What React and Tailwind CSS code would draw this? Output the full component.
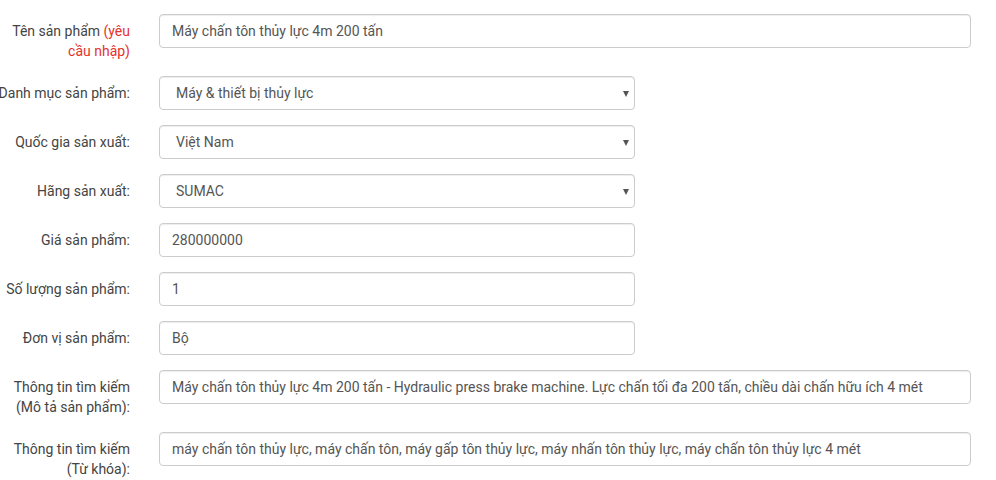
import React from "react";

const rows = [
  { label: "Tên sản phẩm", required: true, value: "Máy chấn tôn thủy lực 4m 200 tấn", kind: "input", wide: true },
  { label: "Danh mục sản phẩm:", value: "Máy & thiết bị thủy lực", kind: "select" },
  { label: "Quốc gia sản xuất:", value: "Việt Nam", kind: "select" },
  { label: "Hãng sản xuất:", value: "SUMAC", kind: "select" },
  { label: "Giá sản phẩm:", value: "280000000", kind: "input" },
  { label: "Số lượng sản phẩm:", value: "1", kind: "input" },
  { label: "Đơn vị sản phẩm:", value: "Bộ", kind: "input" },
  {
    label: "Thông tin tìm kiếm",
    sub: "(Mô tả sản phẩm):",
    value:
      "Máy chấn tôn thủy lực 4m 200 tấn - Hydraulic press brake machine. Lực chấn tối đa 200 tấn, chiều dài chấn hữu ích 4 mét",
    kind: "input",
    wide: true,
  },
  {
    label: "Thông tin tìm kiếm",
    sub: "(Từ khóa):",
    value: "máy chấn tôn thủy lực, máy chấn tôn, máy gấp tôn thủy lực, máy nhấn tôn thủy lực, máy chấn tôn thủy lực 4 mét",
    kind: "input",
    wide: true,
  },
];

const Field = ({ row }) => {
  const width = row.wide ? "w-[812px]" : "w-[476px]";
  if (row.kind === "select") {
    return (
      <div
        className={`${width} relative h-[34px] border border-[#ccc] rounded-[4px] bg-white flex items-center pl-[16px] text-[14px] text-[#555] shadow-[inset_0_1px_1px_rgba(0,0,0,0.075)]`}
      >
        {row.value}
        <span className="absolute right-[5px] top-[14px] w-0 h-0 border-l-[3.5px] border-r-[3.5px] border-t-[6px] border-l-transparent border-r-transparent border-t-[#555]" />
      </div>
    );
  }
  return (
    <input
      readOnly
      value={row.value}
      className={`${width} h-[34px] border border-[#ccc] rounded-[4px] bg-white px-[12px] text-[14px] text-[#555] outline-none shadow-[inset_0_1px_1px_rgba(0,0,0,0.075)]`}
      style={{ fontFamily: "Roboto, 'Noto Sans', sans-serif" }}
    />
  );
};

export default function App() {
  return (
    <div
      className="w-[996px] h-[480px] bg-white overflow-hidden pt-[14px]"
      style={{ fontFamily: "Roboto, 'Noto Sans', sans-serif" }}
    >
      <div className="-ml-[5px] flex flex-col gap-[15px]">
        {rows.map((row, i) => (
          <div key={i} className="flex items-start">
            <div className="w-[135px] shrink-0 pt-[7px] text-right text-[14px] leading-[20px] text-[#444]">
              {row.label}
              {row.required && <span className="text-[#e4312b]"> (yêu cầu nhập)</span>}
              {row.sub && (
                <>
                  <br />
                  {row.sub}
                </>
              )}
            </div>
            <div className="ml-[29px]">
              <Field row={row} />
            </div>
          </div>
        ))}
      </div>
    </div>
  );
}
